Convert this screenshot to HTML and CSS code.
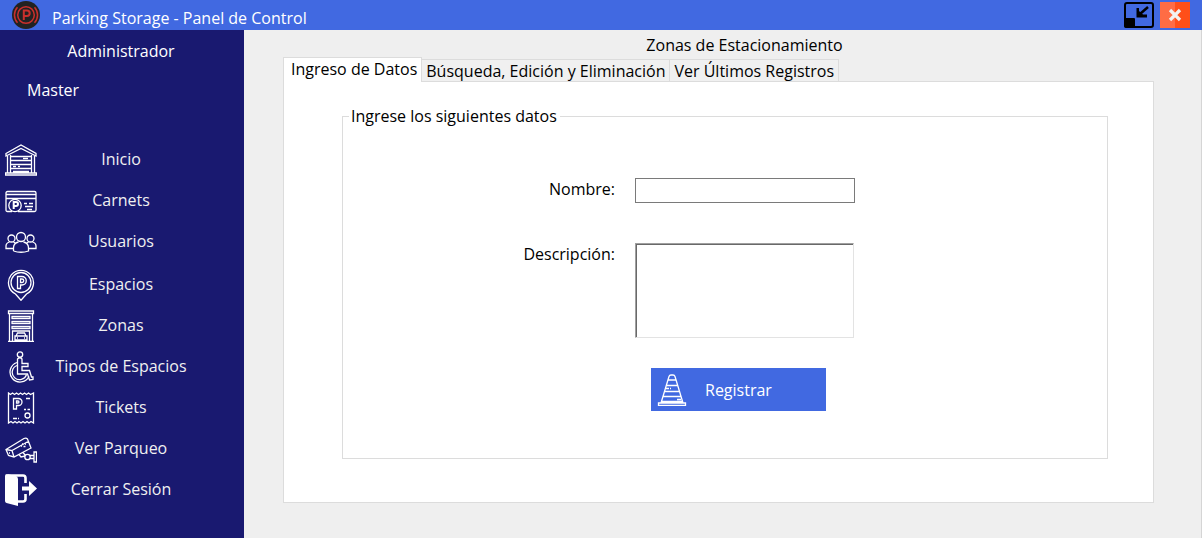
FILE: index.html
```html
<!DOCTYPE html>
<html lang="es">
<head>
<meta charset="utf-8">
<meta name="viewport" content="width=device-width, initial-scale=1">
<title>Parking Storage - Panel de Control</title>
<link rel="stylesheet" href="styles.css">
</head>
<body>
<header class="titlebar">
  <svg class="logo" viewBox="0 0 28 28" aria-hidden="true">
    <circle cx="14" cy="14" r="14" fill="#222"/>
    <g fill="none" stroke="#c9302c" stroke-width="1.5">
      <circle cx="14" cy="14" r="8.3"/>
      <path d="M5.5 6.2a11.5 11.5 0 0 0 0 15.6M22.500 6.200a11.500 11.500 0 0 1 0 15.600"/>
      <path d="M11.800 19V9.500h3.200a2.700 2.700 0 0 1 0 5.400h-3.200" stroke-width="2"/>
    </g>
  </svg>
  <h1 class="titlebar-text">Parking Storage - Panel de Control</h1>
  <button class="window-button" type="button" aria-label="Restaurar">
    <svg viewBox="0 0 30 26" aria-hidden="true">
      <rect x="1" y="1" width="28" height="24" rx="2" fill="none" stroke="#000" stroke-width="2"/>
      <path d="M0 16h10q1 0 1 1v9H2q-2 0-2-2z" fill="#000"/>
      <path d="M24 5L16 12" stroke="#000" stroke-width="2.500"/>
      <path d="M12.500 6h2.500v3l4 3.500h4v3H12.500z" fill="#000"/>
    </svg>
  </button>
  <button class="window-button" type="button" aria-label="Cerrar">
    <svg viewBox="0 0 30 26" aria-hidden="true">
      <path d="M0 0h15v26H0z" fill="#ff6c44"/>
      <path d="M15 0h15v26H15z" fill="#ff4f19"/>
      <path d="M10 8l10 10M20 8L10 18" stroke="#f2f2f2" stroke-width="3.200"/>
    </svg>
  </button>
</header>

<div class="workspace">
  <aside class="sidebar">
    <p class="role">Administrador</p>
    <p class="user">Master</p>
    <nav class="menu">
      <ul class="menu-group">
        <li><button class="menu-item" type="button">
          <svg class="icon" viewBox="0 0 32 32" aria-hidden="true">
            <path d="M1 9.500L16 1l15 8.500v2.500L16 4.500 1 12zM2.500 12v17M29.500 12v17M5.500 11v18M26.500 11v18M.5 31h31v-2H.5zM6 12.500h20M6 16.500h20M6 20.500h20M6 24.500h20M8 27.500h16"/>
            <path d="M18 14.500h5M8 22.500h3M13 22.500h2"/>
          </svg><span>Inicio</span></button></li>
        <li><button class="menu-item" type="button">
          <svg class="icon" viewBox="0 0 32 32" aria-hidden="true">
            <path d="M7 26.500H2.500Q1 26.500 1 25V8q0-1.500 1.500-1.500h27Q31 6.500 31 8v17q0 1.500-1.500 1.500H13M1 9.500h30M1 13.500h30"/>
            <circle cx="10" cy="20.500" r="6.200"/>
            <path d="M8.700 24v-7H11a2 2 0 0 1 0 4H8.700" stroke-width="2"/>
            <path d="M19 18.500h3M24 18.500h4M20 21.500h8M22 24.500h5"/>
          </svg><span>Carnets</span></button></li>
        <li><button class="menu-item" type="button">
          <svg class="icon" viewBox="0 0 32 32" aria-hidden="true">
            <circle cx="16" cy="11" r="4.500"/><circle cx="6.500" cy="12.500" r="3.500"/><circle cx="25.500" cy="12.500" r="3.500"/>
            <path d="M8.500 25v-3q0-5 5-6M18.500 16q5 1 5 6v3q-7.500 2.500-15 0M4.500 16Q1 17 1 20v2.500h7M8.500 16l2.500 1.500M27.500 16q3.500 1 3.500 4v2.500h-7M23.500 16L21 17.500"/>
          </svg><span>Usuarios</span></button></li>
      </ul>
      <ul class="menu-group">
        <li><button class="menu-item" type="button">
          <svg class="icon" viewBox="0 0 32 32" aria-hidden="true">
            <path d="M16 31.300L10.500 25A12.500 12.500 0 1 1 21.500 25z"/>
            <circle cx="16" cy="13.500" r="10"/>
            <path d="M12.500 19.500v-12h4.500a4 4 0 0 1 0 8.500h-1.500v3.500zM15.500 10v3.500H17a1.750 1.750 0 0 0 0-3.500z"/>
          </svg><span>Espacios</span></button></li>
        <li><button class="menu-item" type="button">
          <svg class="icon" viewBox="0 0 32 32" aria-hidden="true">
            <path d="M3.500 1h25v2.500h-25zM4.500 3.500v28M27.500 3.500v28M3 31.500h26M7 6.500h18v2H7zM7 11.500h18v2H7zM7 16.500h18v2H7zM7.500 31V21h17v10M11 26l1.500-3h7l1.500 3M10 26h12v4H10zM12 28h1M19 28h1"/>
          </svg><span>Zonas</span></button></li>
        <li><button class="menu-item" type="button">
          <svg class="icon" viewBox="0 0 32 32" aria-hidden="true">
            <circle cx="15" cy="3.500" r="2.700"/>
            <path d="M12.500 8q2.500-2.500 4.500 0v4.500h6v3h-6v4h7.500l2 6.500h1.500v2.500l-3.500.5L22.500 23h-10z"/>
            <path d="M12 11.500A10 10 0 1 0 24 25.500M12 14.500a7.300 7.300 0 1 0 9.500 9"/>
          </svg><span>Tipos de Espacios</span></button></li>
        <li><button class="menu-item" type="button">
          <svg class="icon" viewBox="0 0 32 32" aria-hidden="true">
            <path d="M3.500 31V1l2 1.500 2-1.500 2 1.500 2-1.500 2 1.500 2-1.500 2 1.500 2-1.500 2 1.500 2-1.500 2 1.500L28.500 1v30l-2.500-1.500-2 1.500-2-1.500-2 1.500-2-1.500-2 1.500-2-1.500-2 1.500-2-1.500-2 1.500-2-1.500z"/>
            <path d="M8.500 17V6.500h5a3.400 3.400 0 0 1 0 7h-2V17zM11.500 9v2h1.500a1 1 0 0 0 0-2z"/>
            <circle cx="22.500" cy="23.500" r="2.500"/>
            <path d="M21 6.500h4M19 17.500h2M22.500 17.500H25M8 26.500h4M13 26.500h1"/>
          </svg><span>Tickets</span></button></li>
        <li><button class="menu-item" type="button">
          <svg class="icon" viewBox="0 0 32 32" aria-hidden="true">
            <path d="M1 16.500L19 5.500q2-1 3.500.5l3.500 9L9 24l-5.500-1.500zM1 16.500l6 1L9 24M7 17.500L24 8M4 20h1"/>
            <path d="M14 21.500l2 2.500 4-1M18 19.500l2.500 3M16 13h1M18.500 13.500h2M17 11h1M20 11h1"/>
            <circle cx="22.500" cy="24" r="2.700"/><path d="M25 22.500h4M25 25.500h4M29 19h2.500v10H29z"/>
          </svg><span>Ver Parqueo</span></button></li>
        <li><button class="menu-item" type="button">
          <svg class="icon" viewBox="0 0 32 32" aria-hidden="true">
            <path d="M2 0L11 2Q13 3 13 5v27L1.500 29Q0 28.500 0 27V2q0-2 2-2z" fill="#fff" stroke="none"/>
            <path d="M3 1.500h15q2.500 0 2.500 2.500v5M13 27.500h5q2.500 0 2.500-2.500v-5" stroke-width="2.600"/>
            <path d="M17 12.500h7V7l8 7.500-8 7.500v-5.500h-7z" fill="#fff" stroke="none"/>
          </svg><span>Cerrar Sesión</span></button></li>
      </ul>
    </nav>
  </aside>

  <main class="content">
    <h2 class="page-title">Zonas de Estacionamiento</h2>
    <div class="tabs" role="tablist">
      <button class="tab tab-active" id="tab-ingreso" type="button" role="tab" aria-selected="true" aria-controls="panel-ingreso">Ingreso de Datos</button>
      <button class="tab" type="button" role="tab" aria-selected="false">Búsqueda, Edición y Eliminación</button>
      <button class="tab" type="button" role="tab" aria-selected="false">Ver Últimos Registros</button>
    </div>
    <section class="panel" id="panel-ingreso" role="tabpanel" aria-labelledby="tab-ingreso">
      <form>
        <fieldset class="group">
          <legend>Ingrese los siguientes datos</legend>
          <div class="fields">
            <label for="nombre">Nombre:</label>
            <input class="text-input" id="nombre" type="text">
            <label for="descripcion">Descripción:</label>
            <textarea class="text-area" id="descripcion"></textarea>
            <button class="submit" type="button">
              <svg class="icon" viewBox="0 0 32 32" aria-hidden="true">
                <path d="M2.500 29h27v2.500h-27zM5 29L13 2.500Q13.500 1 15 1h2q1.500 0 2 1.500L27 29M12 6h8M10.500 11.500h11M9 17.500h14M7.500 22.500h17M6 27.500h20M21 25.500h4M10 14.500h3M14 14.500h1"/>
              </svg>
              <span>Registrar</span>
            </button>
          </div>
        </fieldset>
      </form>
    </section>
  </main>
</div>
</body>
</html>
```
FILE: styles.css
```css
* {
  box-sizing: border-box;
}

body {
  display: flex;
  flex-direction: column;
  min-height: 100vh;
  margin: 0;
  background: #efefef;
  color: #000;
  font: 16px/20px "Open Sans", "Noto Sans", sans-serif;
}

button,
input,
textarea {
  font: inherit;
}

.titlebar {
  display: flex;
  align-items: center;
  gap: 6px;
  height: 30px;
  padding: 0 12px;
  background: #4169e1;
  color: #fff;
}

.logo {
  width: 28px;
  height: 28px;
}

.titlebar-text {
  flex: 1;
  margin: 0;
  padding: 6px 0 0 6px;
  font-size: 16px;
  font-weight: 400;
}

.window-button {
  padding: 0;
  border: 0;
  background: none;
}

.window-button svg {
  display: block;
  width: 30px;
  height: 26px;
}

.workspace {
  display: flex;
  flex: 1;
}

.sidebar {
  width: 244px;
  padding: 11px 2px 0 0;
  background: #191970;
  color: #fff;
}

.role,
.user {
  margin: 0;
}

.role {
  text-align: center;
}

.user {
  padding: 19px 27px 0;
}

.menu {
  display: grid;
  gap: 2px;
  padding-top: 39px;
}

.menu-group {
  margin: 0;
  padding: 0;
  list-style: none;
}

.menu-item {
  display: grid;
  grid-template-columns: 32px 1fr 32px;
  align-items: center;
  width: 100%;
  height: 41px;
  padding: 0 5px;
  border: 0;
  background: none;
  color: #f0f0f0;
}

.menu-item span {
  padding-bottom: 2px;
}

.icon {
  width: 32px;
  height: 32px;
  fill: none;
  stroke: #fff;
  stroke-width: 1.3;
}

.content {
  flex: 1;
  padding: 5px 47px 35px 39px;
  border-right: 1px solid #d5d5d5;
}

.page-title {
  margin: 0;
  padding-left: 52px;
  font-size: 16px;
  font-weight: 400;
  text-align: center;
}

.tabs {
  display: flex;
  align-items: flex-end;
  height: 26px;
}

.tab {
  height: 22px;
  padding: 0 4px;
  border: 1px solid #dcdcdc;
  border-width: 1px 1px 0 0;
  background: #f0f0f0;
  color: #000;
}

.tab-active {
  z-index: 1;
  height: 25px;
  margin-bottom: -1px;
  padding: 0 4px 3px 7px;
  border-left-width: 1px;
  background: #fff;
}

.panel {
  padding: 24px 45px 43px 58px;
  border: 1px solid #dcdcdc;
  background: #fff;
}

.group {
  min-width: 0;
  margin: 0;
  padding: 52px 0 47px;
  border: 1px solid #dcdcdc;
}

.group legend {
  margin-left: 6px;
  padding: 0 3px 0 2px;
}

.fields {
  display: grid;
  grid-template-columns: 272px 220px;
  column-gap: 20px;
}

.fields label {
  padding-top: 1px;
  text-align: right;
}

.text-input {
  height: 25px;
  margin-bottom: 40px;
  border: 1px solid #7a7a7a;
}

.text-area {
  width: 219px;
  height: 95px;
  margin-bottom: 30px;
  border: 2px inset #a0a0a0;
  border-color: #a0a0a0 #e3e3e3 #e3e3e3 #a0a0a0;
  border-width: 1px;
  border-style: solid;
  box-shadow: inset 1px 1px #696969;
  resize: none;
}

.submit {
  display: flex;
  grid-column: 2;
  align-items: center;
  gap: 17px;
  width: 175px;
  height: 43px;
  margin-left: 16px;
  padding: 0 5px;
  border: 0;
  background: #4169e1;
  color: #fff;
}
```
